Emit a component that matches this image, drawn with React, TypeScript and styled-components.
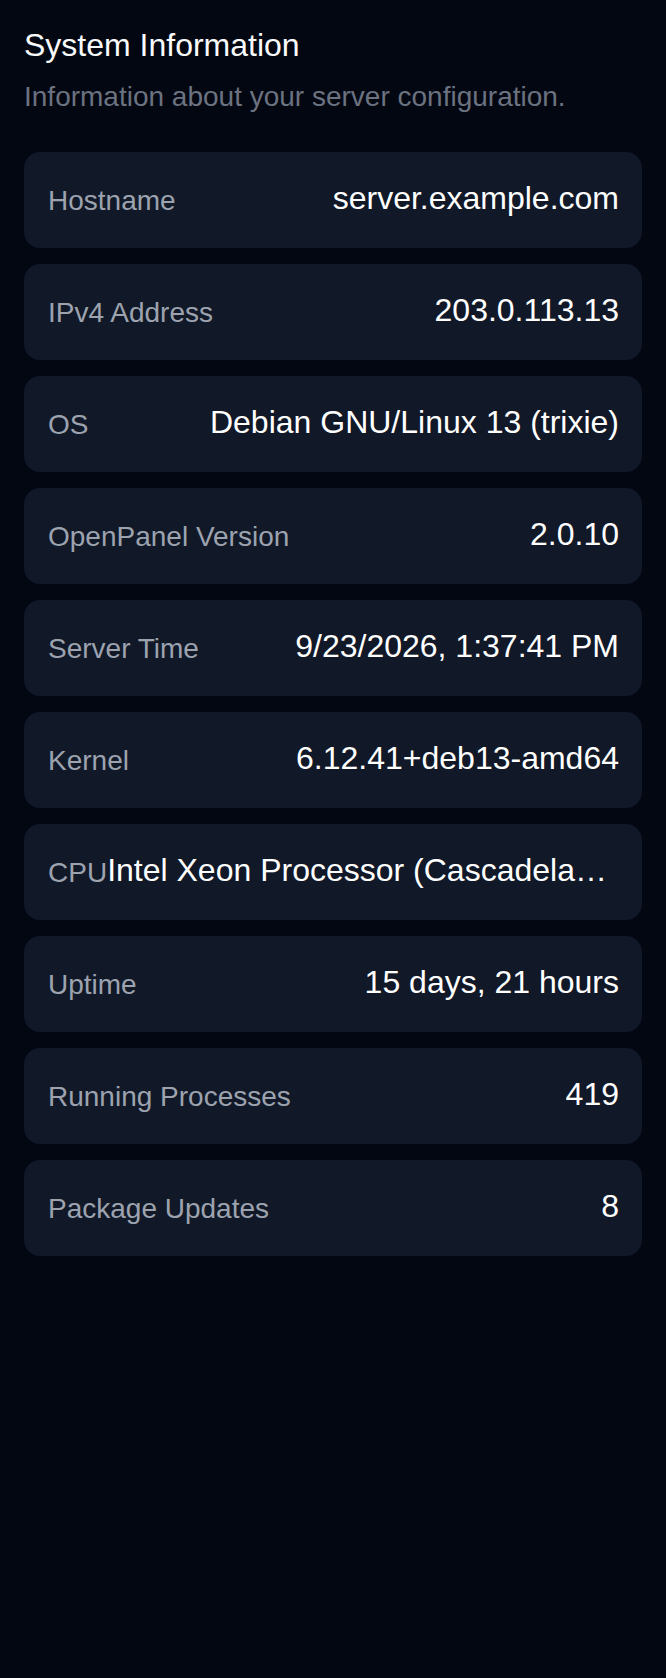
import React from 'react';
import styled, { createGlobalStyle } from 'styled-components';

const GlobalStyle = createGlobalStyle`
  html,
  body {
    margin: 0;
    padding: 0;
    background-color: #030712;
  }
  * {
    box-sizing: border-box;
  }
`;

const rows = [
  { label: 'Hostname', value: 'server.example.com' },
  { label: 'IPv4 Address', value: '203.0.113.13' },
  { label: 'OS', value: 'Debian GNU/Linux 13 (trixie)' },
  { label: 'OpenPanel Version', value: '2.0.10' },
  { label: 'Server Time', value: '9/23/2026, 1:37:41 PM' },
  { label: 'Kernel', value: '6.12.41+deb13-amd64' },
  { label: 'CPU', value: 'Intel Xeon Processor (Cascadelake)' },
  { label: 'Uptime', value: '15 days, 21 hours' },
  { label: 'Running Processes', value: '419' },
  { label: 'Package Updates', value: '8' },
];

function App() {
  return (
    <Wrapper>
      <GlobalStyle />
      <Header>
        <Title>System Information</Title>
        <Subtitle>Information about your server configuration.</Subtitle>
      </Header>
      <List>
        {rows.map((row) => (
          <Item key={row.label}>
            <Label>{row.label}</Label>
            <Value title={row.value}>{row.value}</Value>
          </Item>
        ))}
      </List>
    </Wrapper>
  );
}

export default App;

const Wrapper = styled.div`
  width: 100%;
  min-height: 1678px;
  background-color: #030712;
  padding: 24px;
  font-family: 'Liberation Sans', Arial, sans-serif;
`;

const Header = styled.div`
  display: flex;
  flex-direction: column;
  margin-bottom: 35px;
`;

const Title = styled.h2`
  margin: 0;
  font-size: 32px;
  font-weight: 400;
  line-height: 42px;
  color: #f9fafb;
`;

const Subtitle = styled.p`
  margin: 11px 0 0;
  font-size: 28px;
  line-height: 40px;
  color: #6b7280;
`;

const List = styled.div`
  display: flex;
  flex-direction: column;
  gap: 16px;
`;

const Item = styled.div`
  display: flex;
  align-items: center;
  justify-content: space-between;
  height: 96px;
  padding: 0 23px 0 24px;
  background-color: #111827;
  border-radius: 16px;
`;

const Label = styled.span`
  flex-shrink: 0;
  margin-top: 2px;
  font-size: 28px;
  line-height: 38px;
  color: #9ca3af;
  white-space: nowrap;
`;

const Value = styled.span`
  min-width: 0;
  margin-bottom: 5px;
  font-size: 32px;
  line-height: 42px;
  color: #ffffff;
  text-align: right;
  white-space: nowrap;
  overflow: hidden;
  text-overflow: ellipsis;
`;
